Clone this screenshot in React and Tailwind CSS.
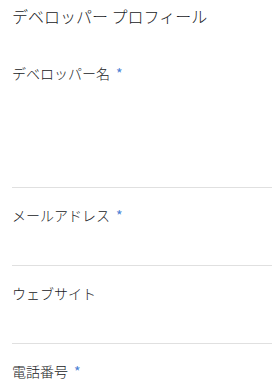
import React from "react";

const fields = [
  { label: "デベロッパー名", required: true, tall: true },
  { label: "メールアドレス", required: true },
  { label: "ウェブサイト", required: false },
  { label: "電話番号", required: true },
];

const App = () => {
  return (
    <div
      className="w-[272px] h-[392px] overflow-hidden bg-white pl-3 text-[#202124]"
      style={{ fontFamily: '"Noto Sans CJK JP", "Noto Sans", sans-serif' }}
    >
      {/* Title */}
      <div className="pt-[6px] text-[16px] leading-[20px] font-light">デベロッパー プロフィール</div>

      <div className="mt-[20px]">
        {fields.map((f) => (
          <div key={f.label} className="border-b border-[#e0e0e0] pt-[17px]">
            <div className="text-[14px] leading-[20px] font-light">
              {f.label}
              {f.required && <span className="ml-[6px] font-normal text-[#4a80d4]">*</span>}
            </div>
            <div className={f.tall ? "h-[104px]" : "h-[40px]"} />
          </div>
        ))}
      </div>
    </div>
  );
};

export default App;
